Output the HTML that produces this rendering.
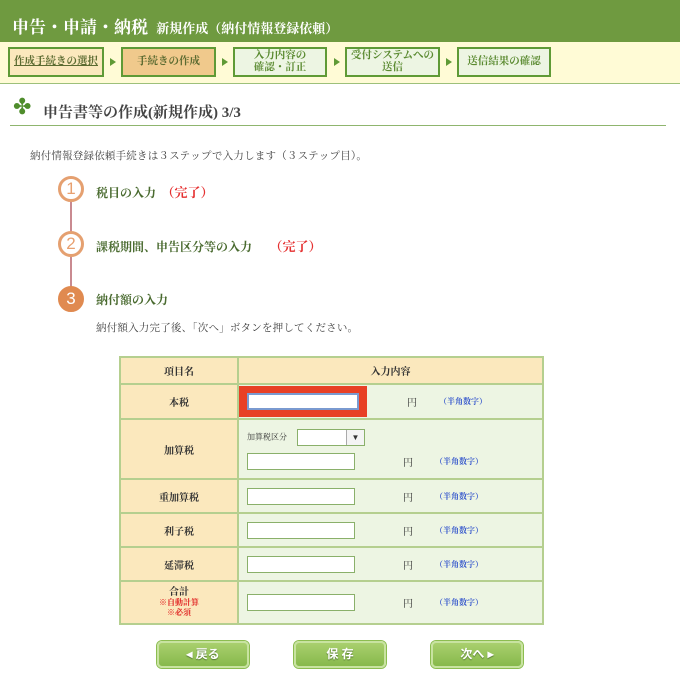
<!DOCTYPE html>
<html><head><meta charset="utf-8"><style>
*{margin:0;padding:0;box-sizing:border-box}
body{width:680px;height:687px;background:#fff;font-family:"Liberation Serif","Noto Serif CJK SC","Noto Sans CJK JP",serif;position:relative;overflow:hidden;color:#333}
.a{position:absolute}
.hd{left:0;top:0;width:680px;height:42px;background:#6f9a40;color:#fff}
.sb{left:0;top:42px;width:680px;height:42px;background:#fffbd6;border-bottom:1px solid #9dc07a}
.st{top:5px;height:30px;border:2px solid #5f9a36;background:#edf5e3;font-size:10.5px;font-weight:bold;color:#5a8a30;display:flex;align-items:center;justify-content:center;text-align:center;line-height:12px}
.ar{top:16px;width:0;height:0;border-left:6px solid #5f9a36;border-top:4px solid transparent;border-bottom:4px solid transparent}
.circ{width:26px;height:26px;border-radius:50%;border:3px solid #e5a070;color:#e8a070;font-family:"Liberation Sans",sans-serif;font-size:17px;text-align:center;line-height:20px;background:#fff}
.lb{font-size:12px;font-weight:bold;color:#4a6b30}
.red{color:#e53030;font-weight:bold;font-size:13px}
table{position:absolute;left:119px;top:356px;width:425px;border-collapse:collapse;font-size:10px}
td{border:2px solid #b5cf8f;background:#edf5e3}
td.k{width:118px;background:#fbe8bd;text-align:center;font-weight:bold}
tr.h td{background:#fbe8bd;text-align:center;font-weight:bold;height:27px}
.in{display:inline-block;width:108px;height:17px;border:1px solid #8ab06a;background:#fff;vertical-align:middle}
.yen{display:inline-block;margin-left:48px;font-size:10px;vertical-align:middle}
.hk{display:inline-block;margin-left:22px;color:#3355cc;font-size:8px;font-weight:bold;vertical-align:middle}
.btn{top:641px;width:92px;height:27px;border-radius:5px;background:linear-gradient(#a9d06e,#87b94b);border:2px solid #c8e3a0;box-shadow:0 0 0 1px #8cbd50;color:#fff;font-weight:bold;font-size:12px;text-align:center;line-height:22px;font-family:"Liberation Sans","Noto Sans CJK JP",sans-serif;text-shadow:0 1px 1px #557733}
</style></head><body>
<div class="a hd"><div class="a" style="left:12px;top:13px;font-size:17px;font-weight:bold;white-space:nowrap">申告・申請・納税 <span style="font-size:13px;margin-left:4px">新規作成（納付情報登録依頼）</span></div></div>
<div class="a sb">
<div class="a st" style="left:8px;width:96px;background:#fbe8bd;text-decoration:underline;color:#5a6a30">作成手続きの選択</div>
<div class="a ar" style="left:110px"></div>
<div class="a st" style="left:121px;width:95px;background:#f0c98c;color:#5a6a30">手続きの作成</div>
<div class="a ar" style="left:222px"></div>
<div class="a st" style="left:233px;width:94px">入力内容の<br>確認・訂正</div>
<div class="a ar" style="left:334px"></div>
<div class="a st" style="left:345px;width:95px">受付システムへの<br>送信</div>
<div class="a ar" style="left:446px"></div>
<div class="a st" style="left:457px;width:94px">送信結果の確認</div>
</div>
<div class="a" style="left:13px;top:97px;color:#4f8d2c;font-size:22px;line-height:20px">✤</div>
<div class="a" style="left:43px;top:101px;font-size:15px;font-weight:bold;color:#444">申告書等の作成(新規作成) 3/3</div>
<div class="a" style="left:10px;top:125px;width:656px;height:1px;background:#8fb56e"></div>
<div class="a" style="left:30px;top:148px;font-size:10.5px;letter-spacing:0.2px;color:#444">納付情報登録依頼手続きは３ステップで入力します（３ステップ目）。</div>
<div class="a" style="left:70px;top:200px;width:2px;height:90px;background:#c98a90"></div>
<div class="a circ" style="left:58px;top:176px">1</div>
<div class="a circ" style="left:58px;top:231px">2</div>
<div class="a circ" style="left:58px;top:286px;background:#e08a50;border-color:#e08a50;color:#fff">3</div>
<div class="a lb" style="left:96px;top:182px">税目の入力　<span class="red">（完了）</span></div>
<div class="a lb" style="left:96px;top:236px">課税期間、申告区分等の入力　　<span class="red">（完了）</span></div>
<div class="a lb" style="left:96px;top:291px">納付額の入力</div>
<div class="a" style="left:96px;top:320px;font-size:10.5px;letter-spacing:0.2px;color:#444">納付額入力完了後、「次へ」ボタンを押してください。</div>
<table>
<tr class="h"><td class="k">項目名</td><td>入力内容</td></tr>
<tr style="height:35px"><td class="k">本税</td><td style="padding:0"><span style="display:inline-block;background:#e84025;padding:7px 8px;vertical-align:middle"><span class="in" style="border:2px solid #7a9ad0;width:112px"></span></span><span class="yen" style="margin-left:40px">円</span><span class="hk">（半角数字）</span></td></tr>
<tr style="height:60px"><td class="k">加算税</td><td style="padding-left:8px"><div style="font-size:8px;margin-bottom:7px">加算税区分 <span style="display:inline-block;width:68px;height:17px;border:1px solid #8ab06a;background:#fff;vertical-align:middle;margin-left:8px;position:relative"><span style="position:absolute;right:0;top:0;width:18px;height:15px;border-left:1px solid #aaa;background:#f4f4f4;text-align:center;font-size:8px;line-height:15px">▼</span></span></div><span class="in"></span><span class="yen">円</span><span class="hk">（半角数字）</span></td></tr>
<tr style="height:34px"><td class="k">重加算税</td><td style="padding-left:8px"><span class="in"></span><span class="yen">円</span><span class="hk">（半角数字）</span></td></tr>
<tr style="height:34px"><td class="k">利子税</td><td style="padding-left:8px"><span class="in"></span><span class="yen">円</span><span class="hk">（半角数字）</span></td></tr>
<tr style="height:34px"><td class="k">延滞税</td><td style="padding-left:8px"><span class="in"></span><span class="yen">円</span><span class="hk">（半角数字）</span></td></tr>
<tr style="height:43px"><td class="k" style="line-height:10px">合計<br><span style="color:#e02020;font-size:8px">※自動計算<br>※必須</span></td><td style="padding-left:8px"><span class="in"></span><span class="yen">円</span><span class="hk">（半角数字）</span></td></tr>
</table>
<div class="a btn" style="left:157px">◂ 戻る</div>
<div class="a btn" style="left:294px">保 存</div>
<div class="a btn" style="left:431px">次へ ▸</div>
</body></html>
